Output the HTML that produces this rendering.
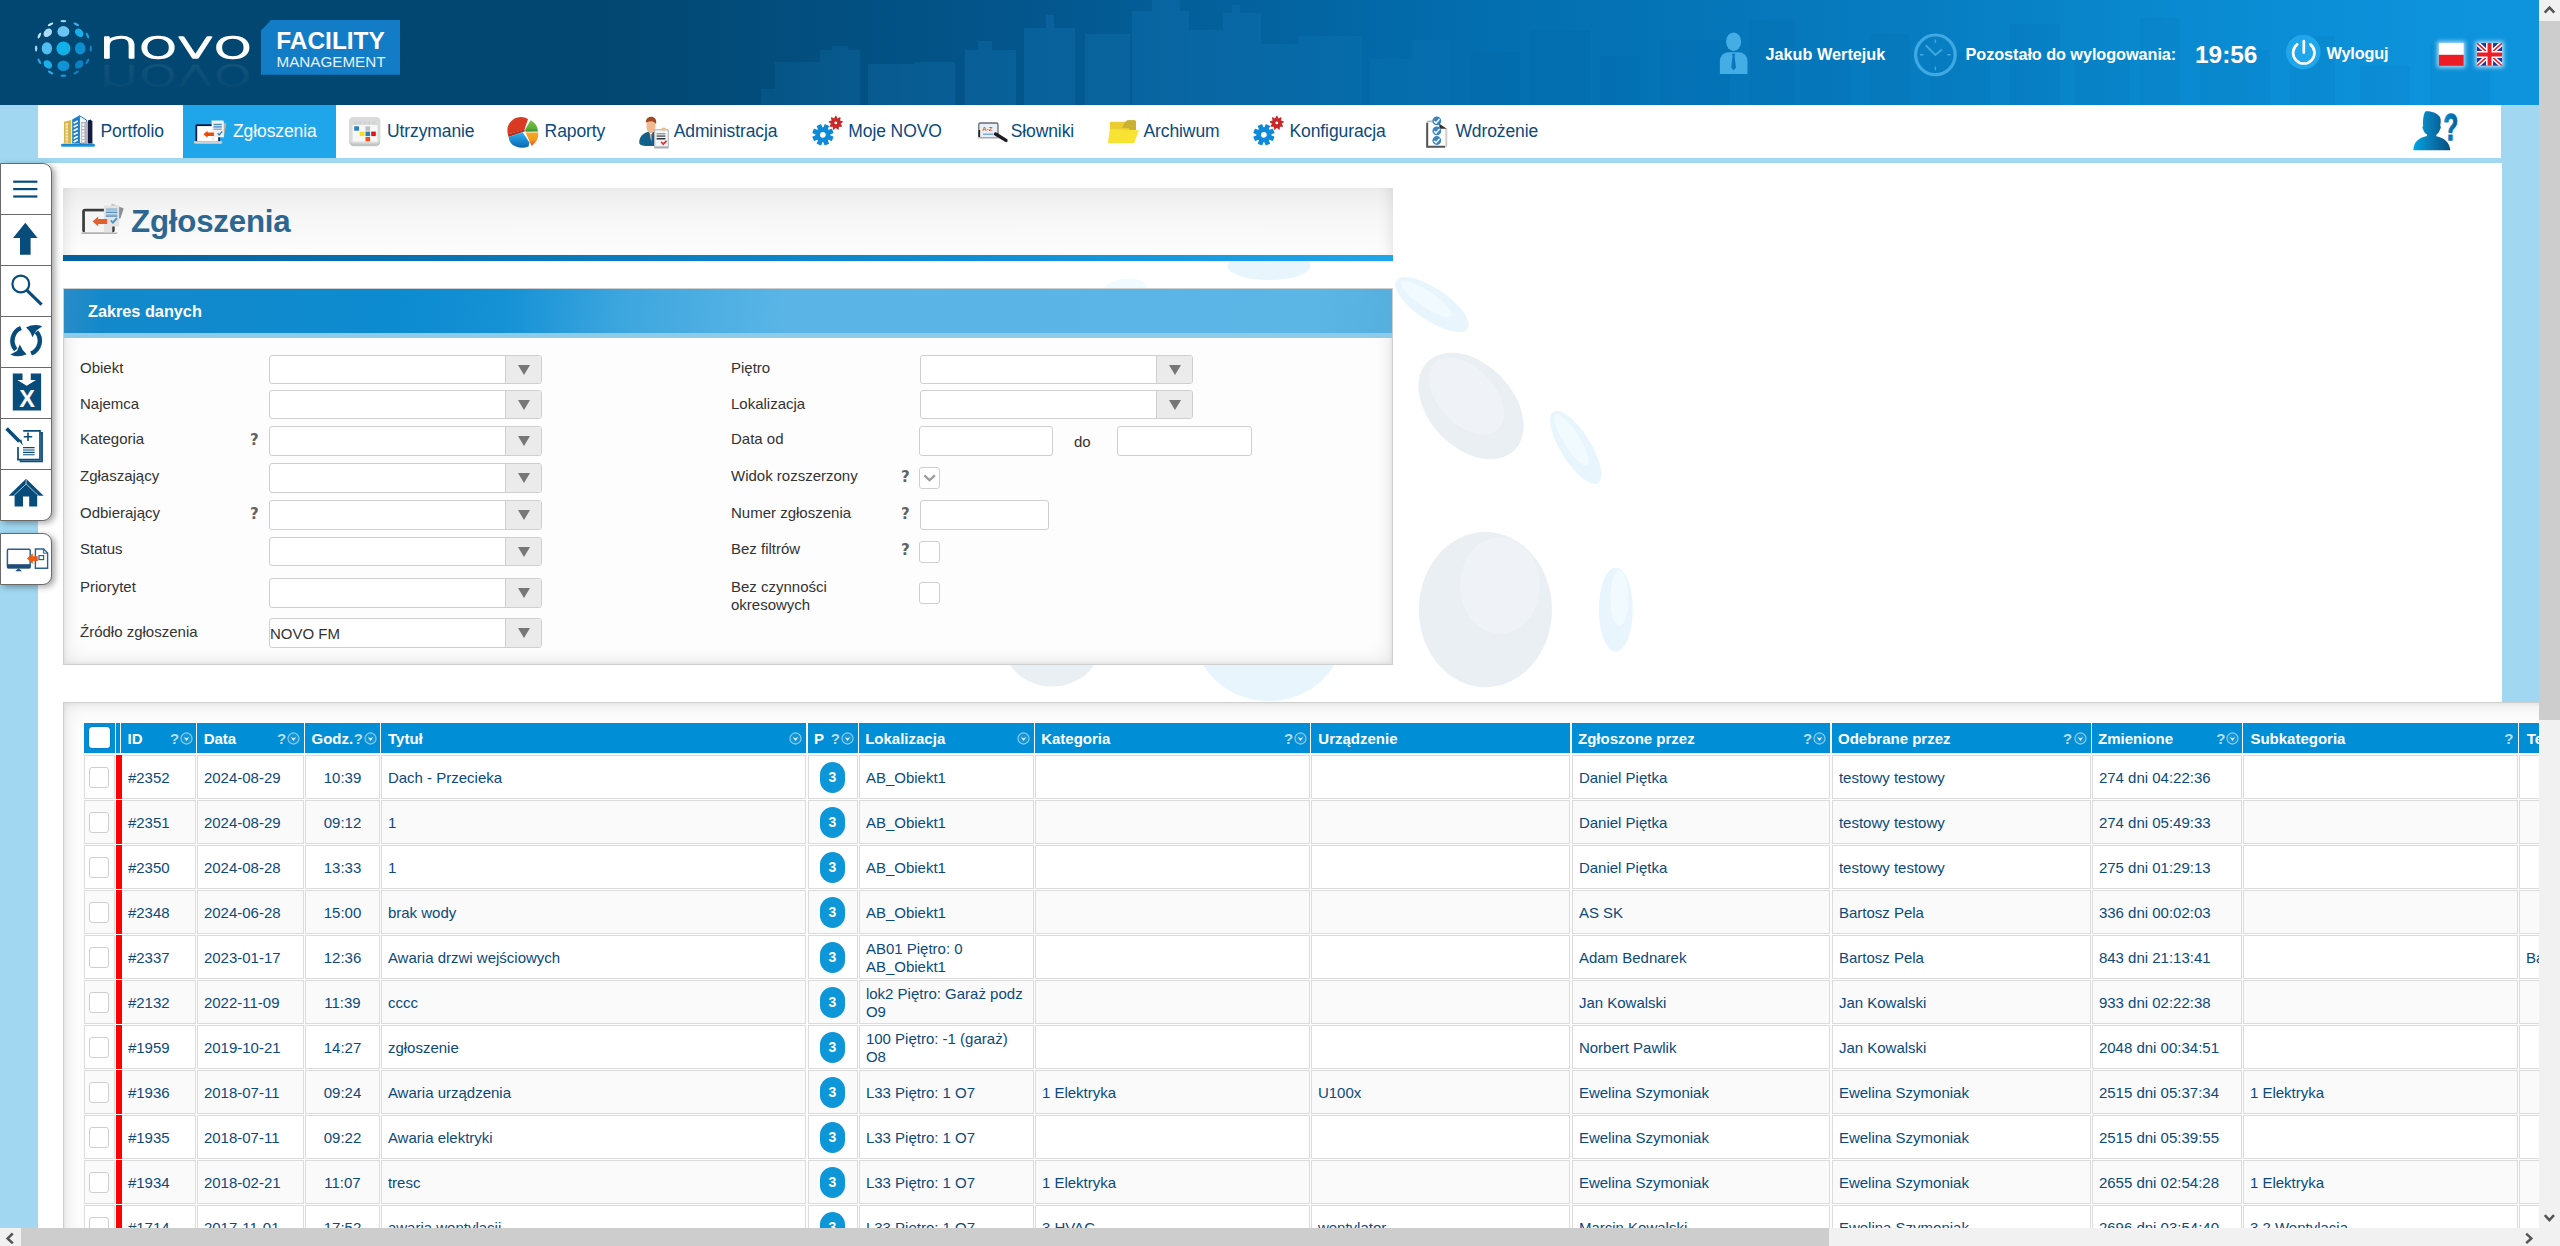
<!DOCTYPE html>
<html lang="pl"><head><meta charset="utf-8"><title>NOVO Facility Management - Zgłoszenia</title>
<style>
*{box-sizing:border-box}
html,body{margin:0;padding:0}
body{width:2560px;height:1246px;overflow:hidden;position:relative;background:#f1f1f1;font-family:"Liberation Sans",sans-serif;font-size:15px;color:#333}
#view{position:absolute;left:0;top:0;width:2539px;height:1228px;overflow:hidden;background:#a1d7f1}
.abs{position:absolute}
#hdr{left:0;top:0;width:2539px;height:105px;background:linear-gradient(90deg,#024771 0,#024771 600px,#03558b 1000px,#036eaf 1480px,#077cc0 1900px,#0a8bd1 2200px,#0d93dc 2450px,#0d94dd 100%)}
#nav{left:37.6px;top:105px;width:2463.5px;height:53px;background:#fff}
#main{left:37.6px;top:163px;width:2464.4px;height:1100px;background:#fff}
.nv{position:absolute;top:105px;height:53px;font-size:17.5px;letter-spacing:-0.1px;color:#0b4a7b;white-space:nowrap;line-height:52px}
.nv.act{background:#1fa5e9;color:#fff}
.nv span{position:absolute;top:0}
.nv svg{position:absolute}
.hw{position:absolute;color:#fff;font-weight:bold;font-size:16.25px;white-space:nowrap;line-height:20px}
.panel{position:absolute;border:1px solid #cfcfcf;background:#fdfdfd;box-shadow:inset 0 0 20px rgba(0,0,0,.11),inset 0 0 5px rgba(0,0,0,.09)}
.lbl{position:absolute;font-size:15px;color:#333;white-space:nowrap;line-height:18px}
.q{position:absolute;font-family:'DejaVu Sans',sans-serif;font-size:15px;font-weight:bold;color:#636363;line-height:18px}
.cb{position:absolute;height:29px;width:273px;border:1px solid #cfcfcf;border-radius:3px;background:#fff;overflow:hidden}
.cb i{position:absolute;right:0;top:0;bottom:0;width:36px;background:#ebebeb;border-left:1px solid #cfcfcf}
.cb i:after{content:"";position:absolute;left:11.5px;top:8.8px;border-left:6px solid transparent;border-right:6px solid transparent;border-top:10px solid #777}
.cb b{position:absolute;left:0;top:6px;font-weight:normal;font-size:15px;color:#333;line-height:18px}
.inp{position:absolute;height:30px;border:1px solid #cfcfcf;border-radius:3px;background:#fff}
.chk{position:absolute;width:21px;height:21.5px;border:1px solid #cfcfcf;border-radius:3px;background:#fff}
.th{position:absolute;top:723px;height:30px;background:#008ed6;color:#fff;font-weight:bold;font-size:15px;line-height:30px;white-space:nowrap;overflow:hidden}
.th span{position:absolute;top:0.8px}
.th .hq{font-size:15px;color:rgba(255,255,255,.72)}
.th svg{position:absolute;top:8.5px}
.td{position:absolute;border:1px solid #dcdcdc;color:#0b4a7b;font-size:15px;line-height:18px;white-space:nowrap;overflow:hidden}
.td span{position:absolute}
.bd{position:absolute;width:25px;height:31px;border-radius:12.5px;background:#0d97d9;color:#fff;font-weight:bold;font-size:14px;line-height:31px;text-align:center}
.rc{position:absolute;width:20.5px;height:20.5px;border:1px solid #cfcfcf;border-radius:3px;background:#fff}
</style></head><body>
<div id="view">
<div id="hdr" class="abs"><svg width="2539" height="105" style="position:absolute;left:0;top:0"><defs><linearGradient id="skf" gradientUnits="userSpaceOnUse" x1="760" y1="0" x2="1460" y2="0"><stop offset="0" stop-color="#1f86c8" stop-opacity="0.14"/><stop offset="0.35" stop-color="#1f8ccf" stop-opacity="0.2"/><stop offset="0.7" stop-color="#2a96dc" stop-opacity="0.12"/><stop offset="1" stop-color="#2a96dc" stop-opacity="0.04"/></linearGradient></defs><path d="M761 105 L761 105 L761 89 L775 89 L775 62 L820 62 L820 50 L832 50 L832 46 L848 46 L848 50 L860 50 L860 105 L868 105 L868 64 L915 64 L915 62 L955 62 L955 105 L965 105 L965 50 L978 50 L978 41 L992 41 L992 50 L1016 50 L1016 105 L1024 105 L1024 28 L1046 28 L1046 15 L1054 15 L1054 28 L1075 28 L1075 105 L1085 105 L1085 34 L1130 34 L1130 105 L1132 105 L1132 11 L1152 11 L1152 0 L1180 0 L1180 11 L1189 11 L1189 30 L1223 30 L1223 13 L1232 13 L1232 5 L1240 5 L1240 13 L1261 13 L1261 44 L1299 44 L1299 36 L1362 36 L1362 105 L1370 105 L1370 59 L1413 59 L1413 40 L1450 40 L1450 105 Z" fill="url(#skf)"/><path d="M1470 105 L1470 105 L1470 52 L1520 52 L1520 105 L1530 105 L1530 30 L1590 30 L1590 105 L1600 105 L1600 56 L1640 56 L1640 105 L1660 105 L1660 40 L1730 40 L1730 105 L1750 105 L1750 20 L1795 20 L1795 105 L1800 105 L1800 60 L1850 60 L1850 105 L1870 105 L1870 34 L1910 34 L1910 105 L1930 105 L1930 52 L1990 52 L1990 105 L2010 105 L2010 24 L2060 24 L2060 105 L2075 105 L2075 60 L2130 60 L2130 105 L2140 105 L2140 18 L2180 18 L2180 105 L2200 105 L2200 50 L2270 50 L2270 105 L2290 105 L2290 36 L2335 36 L2335 105 L2360 105 L2360 66 L2410 66 L2410 105 L2430 105 L2430 44 L2490 44 L2490 105 Z" fill="#035a96" opacity="0.07"/></svg></div>
<div class="abs" style="left:33px;top:17px"><svg width="372" height="64" viewBox="0 0 372 64" style="display:block;overflow:visible"><defs><linearGradient id="rf" x1="0" y1="0" x2="0" y2="1"><stop offset="0" stop-color="#fff" stop-opacity="0.0"/><stop offset="1" stop-color="#fff" stop-opacity="0.085"/></linearGradient></defs><ellipse cx="30.40" cy="31.40" rx="7.00" ry="7.00" fill="#10b0e8" transform="rotate(0 30.40 31.40)"/><ellipse cx="13.90" cy="31.40" rx="5.20" ry="6.10" fill="#52bdf0" transform="rotate(0 13.90 31.40)"/><ellipse cx="47.20" cy="31.40" rx="5.20" ry="6.10" fill="#0c8fd0" transform="rotate(0 47.20 31.40)"/><ellipse cx="30.40" cy="14.40" rx="6.00" ry="5.30" fill="#6ac5f5" transform="rotate(0 30.40 14.40)"/><ellipse cx="30.40" cy="48.80" rx="6.00" ry="5.30" fill="#1192d4" transform="rotate(0 30.40 48.80)"/><ellipse cx="14.80" cy="15.80" rx="4.80" ry="3.60" fill="#a8dcf7" transform="rotate(-45 14.80 15.80)"/><ellipse cx="46.20" cy="15.80" rx="4.80" ry="3.60" fill="#18b0ea" transform="rotate(45 46.20 15.80)"/><ellipse cx="14.80" cy="47.40" rx="4.80" ry="3.60" fill="#18b0ea" transform="rotate(45 14.80 47.40)"/><ellipse cx="46.20" cy="47.40" rx="4.80" ry="3.60" fill="#0c80c4" transform="rotate(-45 46.20 47.40)"/><ellipse cx="30.40" cy="4.10" rx="1.20" ry="3.00" fill="#9fd8f6" transform="rotate(-90 30.40 4.10)"/><ellipse cx="30.40" cy="58.70" rx="1.20" ry="3.00" fill="#1792d2" transform="rotate(90 30.40 58.70)"/><ellipse cx="3.10" cy="31.40" rx="1.20" ry="3.00" fill="#9fd8f6" transform="rotate(180 3.10 31.40)"/><ellipse cx="57.70" cy="31.40" rx="1.20" ry="3.00" fill="#0f86c8" transform="rotate(0 57.70 31.40)"/><ellipse cx="17.58" cy="7.30" rx="1.20" ry="3.10" fill="#bfe5f8" transform="rotate(-118 17.58 7.30)"/><ellipse cx="43.22" cy="7.30" rx="1.20" ry="3.10" fill="#3cb4ea" transform="rotate(-62 43.22 7.30)"/><ellipse cx="6.30" cy="18.58" rx="1.20" ry="3.10" fill="#bfe5f8" transform="rotate(-152 6.30 18.58)"/><ellipse cx="54.50" cy="18.58" rx="1.20" ry="3.10" fill="#18a0e0" transform="rotate(-28 54.50 18.58)"/><ellipse cx="6.30" cy="44.22" rx="1.20" ry="3.10" fill="#2aa8e6" transform="rotate(152 6.30 44.22)"/><ellipse cx="54.50" cy="44.22" rx="1.20" ry="3.10" fill="#0f86c8" transform="rotate(28 54.50 44.22)"/><ellipse cx="17.58" cy="55.50" rx="1.20" ry="3.10" fill="#2aa8e6" transform="rotate(118 17.58 55.50)"/><ellipse cx="43.22" cy="55.50" rx="1.20" ry="3.10" fill="#0f80c0" transform="rotate(62 43.22 55.50)"/><text transform="translate(64.8 40.6) scale(1.84 1)" font-family="DejaVu Sans,Liberation Sans,sans-serif" font-weight="200" font-size="36.5" letter-spacing="-1.6" stroke-width="2.2" vector-effect="non-scaling-stroke" stroke-linejoin="round" fill="#fff" stroke="#fff">novo</text><g opacity="0.55"><text transform="translate(64.8 47.6) scale(1.84 -1)" font-family="DejaVu Sans,Liberation Sans,sans-serif" font-weight="200" font-size="36.5" letter-spacing="-1.6" stroke-width="2.2" vector-effect="non-scaling-stroke" stroke-linejoin="round" fill="url(#rf)" stroke="url(#rf)">novo</text></g><path d="M238 3 H367 V57.8 H228 V13.5 Z" fill="#127cc6"/><text x="243.3" y="32" font-family="Liberation Sans,sans-serif" font-weight="bold" font-size="24" fill="#fff" textLength="108.5" lengthAdjust="spacingAndGlyphs">FACILITY</text><text x="243.5" y="49.6" font-family="Liberation Sans,sans-serif" font-size="14" fill="#e6f2fb" textLength="109" lengthAdjust="spacingAndGlyphs">MANAGEMENT</text></svg></div>
<div class="abs" style="left:1719px;top:32px"><svg width="29" height="42" viewBox="0 0 29 42" style="display:block;overflow:visible" >
<ellipse cx="14.6" cy="9.7" rx="7.5" ry="9.3" fill="#44ade6"/>
<path d="M0.9 42 V30 Q0.9 20.3 10.4 20.3 H18.8 Q28.5 20.3 28.5 30 V42 Z" fill="#44ade6"/>
<path d="M12.8 21.8 H16.4 L15.6 24 L17 35.6 L14.6 38.4 L12.2 35.6 L13.6 24 Z" fill="#0a76bc"/>
</svg></div>
<div class="hw" style="left:1765.5px;top:44px">Jakub Wertejuk</div>
<div class="abs" style="left:1913px;top:33px"><svg width="45" height="45" viewBox="0 0 45 45" style="display:block;overflow:visible" >
<g stroke="#3fa9e3" fill="none">
<circle cx="22.4" cy="21.8" r="19.8" stroke-width="3.2"/>
<path d="M22.4 6.4 v3.6 M22.4 33.6 v3.6 M7 21.8 h3.6 M34.2 21.8 h3.6" stroke-width="1.4"/>
<path d="M12.8 12.4 L22.4 22 L29 16.4" stroke-width="2"/>
</g>
</svg></div>
<div class="hw" style="left:1965.5px;top:44px;letter-spacing:-0.06px">Pozostało do wylogowania:</div>
<div class="hw" style="left:2195px;top:40px;font-size:24.4px;line-height:30px">19:56</div>
<div class="abs" style="left:2285px;top:34px"><svg width="37" height="37" viewBox="0 0 37 37" style="display:block;overflow:visible" >
<circle cx="18.3" cy="18.1" r="17.3" fill="#20a6ea"/>
<path d="M12.2 10.4 A10.7 10.7 0 1 0 25.4 10.4" stroke="#fff" stroke-width="2.7" fill="none" stroke-linecap="round"/>
<path d="M18.8 7.2 V18.6" stroke="#fff" stroke-width="2.7" stroke-linecap="round"/>
</svg></div>
<div class="hw" style="left:2326.5px;top:43px;letter-spacing:-0.15px">Wyloguj</div>
<div class="abs" style="left:2431px;top:35px"><svg width="80" height="40" viewBox="0 0 80 40" style="display:block;overflow:visible" >
<defs><filter id="gl" x="-30%" y="-30%" width="160%" height="160%"><feGaussianBlur stdDeviation="2.2"/></filter>
<clipPath id="uk"><rect x="46" y="8.1" width="25.1" height="22.7"/></clipPath></defs>
<rect x="6.4" y="6.6" width="27.7" height="25.7" fill="#e8f6ff" opacity=".8" filter="url(#gl)"/>
<rect x="44.5" y="6.6" width="28.1" height="25.7" fill="#e8f6ff" opacity=".8" filter="url(#gl)"/>
<rect x="7.9" y="8.1" width="24.7" height="11.8" fill="#fff"/>
<rect x="7.9" y="19.8" width="24.7" height="11" fill="#ed1c24"/>
<g clip-path="url(#uk)">
<rect x="46" y="8.1" width="25.1" height="22.7" fill="#2a2f96"/>
<path d="M46 8.1 L71.1 30.8 M71.1 8.1 L46 30.8" stroke="#fff" stroke-width="4.6"/>
<path d="M46 8.1 L71.1 30.8 M71.1 8.1 L46 30.8" stroke="#e8212b" stroke-width="1.6"/>
<path d="M58.55 8.1 V30.8 M46 19.45 H71.1" stroke="#fff" stroke-width="7"/>
<path d="M58.55 8.1 V30.8 M46 19.45 H71.1" stroke="#ee1c25" stroke-width="4"/>
</g>
</svg></div>
<div id="nav" class="abs"></div>
<div id="main" class="abs"><svg width="2465" height="540" style="position:absolute;left:0;top:0"><ellipse cx="1230.8" cy="103.0" rx="41.5" ry="14.0" fill="#e8f5fc" opacity="1" transform="rotate(0 1230.8 103.0)"/><ellipse cx="1086.4" cy="126.0" rx="22.0" ry="10.0" fill="#f1fafe" opacity="1" transform="rotate(-8 1086.4 126.0)"/><ellipse cx="1394.0" cy="141.6" rx="43.0" ry="16.0" fill="#e8f5fc" opacity="1" transform="rotate(34 1394.0 141.6)"/><ellipse cx="1388.4" cy="136.0" rx="30.0" ry="8.0" fill="#f1fafe" opacity="1" transform="rotate(34 1388.4 136.0)"/><ellipse cx="1433.0" cy="243.0" rx="62.0" ry="42.0" fill="#eaeff4" opacity="1" transform="rotate(46 1433.0 243.0)"/><ellipse cx="1428.4" cy="233.0" rx="46.0" ry="28.0" fill="#eff3f7" opacity="1" transform="rotate(46 1428.4 233.0)"/><ellipse cx="1537.7" cy="284.3" rx="42.0" ry="15.0" fill="#e8f5fc" opacity="1" transform="rotate(58 1537.7 284.3)"/><ellipse cx="1533.4" cy="277.0" rx="30.0" ry="8.0" fill="#f1fafe" opacity="1" transform="rotate(58 1533.4 277.0)"/><ellipse cx="1447.4" cy="446.6" rx="66.6" ry="77.6" fill="#eaeff4" opacity="1" transform="rotate(0 1447.4 446.6)"/><ellipse cx="1461.9" cy="422.4" rx="40.0" ry="48.0" fill="#eff3f7" opacity="1" transform="rotate(0 1461.9 422.4)"/><ellipse cx="1577.8" cy="446.6" rx="17.0" ry="42.0" fill="#e8f5fc" opacity="1" transform="rotate(0 1577.8 446.6)"/><ellipse cx="1581.4" cy="435.0" rx="9.0" ry="28.0" fill="#f1fafe" opacity="1" transform="rotate(0 1581.4 435.0)"/><ellipse cx="1014.1" cy="477.0" rx="50.0" ry="46.6" fill="#eaeff4" opacity="1" transform="rotate(0 1014.1 477.0)"/><ellipse cx="1230.8" cy="468.0" rx="75.0" ry="70.0" fill="#e8f5fc" opacity="1" transform="rotate(0 1230.8 468.0)"/></svg></div>
<div class="abs" style="left:61px;top:115px"><svg width="35" height="33" viewBox="0 0 35 33" style="display:block;overflow:visible" >
<defs><linearGradient id="bb" x1="0" y1="0" x2="0" y2="1"><stop offset="0" stop-color="#1180cc"/><stop offset="1" stop-color="#2b9be0"/></linearGradient></defs>
<rect x="0" y="28.7" width="34" height="3" rx="1.5" fill="url(#bb)"/>
<path d="M2.9 6.8 L10.3 5 L10.3 28.6 L2.9 28.6 Z" fill="#d6b848"/>
<path d="M4.6 8.6 L7 8 L7 27.4 L4.6 27.4 Z" fill="#f6e8d8"/>
<path d="M4.4 11h3M4.4 14h3M4.4 17h3M4.4 20h3M4.4 23h3M4.4 26h3" stroke="#d6b848" stroke-width="0.9"/>
<path d="M11.2 4.4 L18.4 0.6 L18.4 28.6 L11.2 28.6 Z" fill="#1a7fc8"/>
<path d="M18.4 0.6 L25.6 5.2 L25.6 28.6 L18.4 28.6 Z" fill="#f4f8fc" stroke="#1a7fc8" stroke-width="1"/>
<path d="M12.6 8.2 L16.8 6 M12.6 12 L16.8 9.8 M12.6 15.8 L16.8 13.6 M12.6 19.6 L16.8 17.4 M12.6 23.4 L16.8 21.2 M12.6 27 L16.8 24.8" stroke="#fff" stroke-width="1.7"/>
<rect x="20.2" y="7" width="6.6" height="21.6" fill="#b4b4be"/>
<path d="M22.3 8.6v19" stroke="#fff" stroke-width="2.2" stroke-dasharray="2.2 1.1"/>
<path d="M26.9 5.4 L29.6 4.6 L31.4 6.4 L31.4 28.6 L26.9 28.6 Z" fill="#121c42"/>
</svg></div>
<div class="nv" style="left:100.5px;background:none">Portfolio</div>
<div class="nv act" style="left:183px;width:153px"></div>
<div class="abs" style="left:194.2px;top:120.1px"><svg width="33" height="24" viewBox="0 0 33 24" style="display:block;overflow:visible" >
<path d="M23 1.2 L32.4 3.6 L29.8 17.4 L22 15.6 Z" fill="#b9b0a4"/>
<rect x="1.5" y="4.2" width="24.4" height="17.4" rx="1" fill="#0f1b3e"/>
<rect x="3.2" y="6.1" width="21" height="15.2" fill="#fff"/>
<path d="M0 21.2 H28.3 V22.6 Q28.3 23.7 27 23.7 H1.3 Q0 23.7 0 22.6 Z" fill="#d4d4d4"/>
<path d="M17.6 0.6 H28.6 Q29.8 0.6 29.8 1.8 V17.3 H21 V21.2 H17.6 Z" fill="#f1f1f1"/>
<rect x="19.5" y="3.8" width="8.3" height="1.4" fill="#4a8cc4"/><rect x="19.5" y="6.2" width="8.3" height="1.4" fill="#4a8cc4"/><rect x="19.5" y="8.6" width="8.3" height="1.2" fill="#6fa3d0"/>
<path d="M23.6 13.2 L25.2 15 L28.2 11.4" stroke="#2f7fc4" stroke-width="1.4" fill="none"/>
<path d="M9.4 14.3 L13.6 10.8 V12.6 H19.9 V16 H13.6 V17.8 Z" fill="#e84e0b"/>
</svg></div>
<div class="nv act" style="left:233px;background:none">Zgłoszenia</div>
<div class="abs" style="left:349px;top:117px"><svg width="32" height="30" viewBox="0 0 32 30" style="display:block;overflow:visible" >
<rect x="0.2" y="0" width="31" height="29.2" rx="4.5" fill="#c3c6c6"/>
<rect x="0.2" y="0" width="31" height="26.6" rx="4.5" fill="#dadcdc"/>
<g fill="#cfd1d1"><rect x="5" y="4.6" width="2.6" height="2.4"/><rect x="9.6" y="4.6" width="2.6" height="2.4"/><rect x="14.2" y="4.6" width="2.6" height="2.4"/><rect x="18.8" y="4.6" width="2.6" height="2.4"/><rect x="23.4" y="4.6" width="2.6" height="2.4"/></g>
<rect x="3.6" y="8" width="24.8" height="16.6" fill="#f7f7f7"/>
<rect x="5.2" y="9.3" width="4.8" height="4.4" fill="#2d7fc0"/>
<rect x="16.5" y="9.3" width="4.6" height="4.4" fill="#bfc0c0"/>
<rect x="10.7" y="14.6" width="4.8" height="4.5" fill="#f5e020"/>
<rect x="16.5" y="14.6" width="4.6" height="4.5" fill="#2d7fc0"/>
<rect x="22.2" y="14.6" width="4.6" height="4.5" fill="#e01414"/>
<rect x="16.5" y="20" width="4.6" height="4.3" fill="#f0521a"/>
</svg></div>
<div class="nv" style="left:387px;background:none">Utrzymanie</div>
<div class="abs" style="left:507px;top:117px"><svg width="32" height="31" viewBox="0 0 32 31" style="display:block;overflow:visible" >
<defs>
<linearGradient id="pb" x1="0" y1="0" x2="0" y2="1"><stop offset="0" stop-color="#35b4f0"/><stop offset="0.45" stop-color="#1e90d8"/><stop offset="1" stop-color="#0a66b0"/></linearGradient>
<linearGradient id="po" x1="0" y1="0" x2="0" y2="1"><stop offset="0" stop-color="#f8a820"/><stop offset="0.55" stop-color="#f59a20"/><stop offset="1" stop-color="#e04a20"/></linearGradient>
<linearGradient id="pg" x1="0" y1="0" x2="0" y2="1"><stop offset="0" stop-color="#7cc440"/><stop offset="0.7" stop-color="#5aae3c"/><stop offset="1" stop-color="#2f8f3c"/></linearGradient>
</defs>
<path d="M0.9 17.4 C-0.4 12 0.8 6.6 5.5 3 C10 -0.6 17 -0.8 21 2.2 L17.4 12.8 Z" fill="#d83a24"/>
<path d="M0.9 17.2 L17.4 12.6 L18 14.2 L1.5 19.9 Z" fill="#b82c1c"/>
<path d="M1.7 20 L15.4 14.9 L22.4 25.6 L21.6 29.4 C16 31.8 9 30.8 5 27.2 C3 25.4 1.8 22.8 1.7 20 Z" fill="url(#pb)"/>
<path d="M18.2 12.6 L23.6 3.2 C27.5 5 30.6 9 31 14.6 L18.6 14.8 Z" fill="url(#pg)"/>
<path d="M18.6 15.4 L31.2 15.4 C31.6 20 30 23 28.6 25 L24.6 29 Z" fill="url(#po)"/>
</svg></div>
<div class="nv" style="left:544.6px;background:none">Raporty</div>
<div class="abs" style="left:639px;top:116px"><svg width="31" height="33" viewBox="0 0 31 33" style="display:block;overflow:visible" >
<path d="M0.2 27 C0 21 4 17 10 15.6 L15 16 L15 30 L6 30 C2.5 29.6 0.4 28.6 0.2 27 Z" fill="#14608c"/>
<path d="M10.4 15.8 L12.2 25 L13.4 16 Z" fill="#fff"/>
<path d="M11.4 18 L12.4 26.4 L13.2 18 Z" fill="#f06a50"/>
<path d="M7.6 5.6 H16.4 V11.6 C16.4 14.6 14.6 16.6 12.8 17 L11 17 C9.2 16.4 7.6 14.6 7.6 11.6 Z" fill="#f2b98f"/>
<path d="M6.9 6.8 C6.6 3 9 0.8 12 0.8 C15.6 0.8 17.6 3 17.2 7.4 L16.2 7.6 C15.6 5.6 13 5.4 11 5.6 C9 5.8 7.6 6 6.9 6.8 Z" fill="#a04a24"/>
<rect x="15.2" y="13.2" width="14.6" height="19.4" rx="1" fill="#a9abad"/>
<rect x="16.2" y="14.2" width="12.6" height="16.2" fill="#eef6fb"/>
<ellipse cx="24.6" cy="13.2" rx="2.5" ry="1.8" fill="#f2b98f"/>
<rect x="17.6" y="17.2" width="8.8" height="1.2" fill="#8a8a8a"/><rect x="17.6" y="19.4" width="8.8" height="1.4" fill="#555"/><rect x="17.6" y="22" width="8.8" height="1.5" fill="#333"/>
<path d="M22.2 25.8 L24.2 28.2 L27.6 24.8" stroke="#e63030" stroke-width="1.7" fill="none"/>
</svg></div>
<div class="nv" style="left:673.7px;background:none">Administracja</div>
<div class="abs" style="left:812px;top:115px"><svg width="33" height="31" viewBox="0 0 33 31" style="display:block;overflow:visible" ><path d="M20.87 21.95 L19.47 25.33 L16.47 24.04 L15.14 25.37 L16.43 28.37 L13.05 29.77 L11.85 26.74 L9.95 26.74 L8.75 29.77 L5.37 28.37 L6.66 25.37 L5.33 24.04 L2.33 25.33 L0.93 21.95 L3.96 20.75 L3.96 18.85 L0.93 17.65 L2.33 14.27 L5.33 15.56 L6.66 14.23 L5.37 11.23 L8.75 9.83 L9.95 12.86 L11.85 12.86 L13.05 9.83 L16.43 11.23 L15.14 14.23 L16.47 15.56 L19.47 14.27 L20.87 17.65 L17.84 18.85 L17.84 20.75 Z M7.40 19.80 a3.50 3.50 0 1 0 7.00 0 a3.50 3.50 0 1 0 -7.00 0 Z" fill="#0d8ad8" fill-rule="evenodd" stroke="#0d8ad8" stroke-width="1.2" stroke-linejoin="round"/><path d="M23.80 1.35 L25.17 4.19 L28.04 2.89 L27.26 5.95 L30.30 6.80 L27.74 8.64 L29.52 11.25 L26.37 11.01 L26.06 14.15 L23.80 11.95 L21.54 14.15 L21.23 11.01 L18.08 11.25 L19.86 8.64 L17.30 6.80 L20.34 5.95 L19.56 2.89 L22.43 4.19 Z M21.80 7.95 a2.00 2.00 0 1 0 4.00 0 a2.00 2.00 0 1 0 -4.00 0 Z" fill="#c8282a" fill-rule="evenodd" stroke="#c8282a" stroke-width="1.2" stroke-linejoin="round"/></svg></div>
<div class="nv" style="left:848.3px;background:none">Moje NOVO</div>
<div class="abs" style="left:977px;top:121px"><svg width="31" height="21" viewBox="0 0 31 21" style="display:block;overflow:visible" >
<rect x="1.8" y="2" width="19.2" height="14.6" rx="1.6" fill="#e9eff6" stroke="#6a6a78" stroke-width="1.3"/>
<path d="M0.4 17 H22" stroke="#cfcfcf" stroke-width="1.2"/>
<path d="M2.3 9 V16" stroke="#222" stroke-width="1.6"/>
<text x="5.2" y="9.6" font-family="Liberation Sans,sans-serif" font-size="6.2" font-weight="bold" fill="#e0502c">A-Z</text>
<path d="M6 13.2 H16.5" stroke="#5c94c8" stroke-width="1.1"/>
<path d="M18.6 13 L29 19.4" stroke="#1c1c22" stroke-width="3.4" stroke-linecap="round"/>
</svg></div>
<div class="nv" style="left:1010.7px;background:none">Słowniki</div>
<div class="abs" style="left:1108px;top:120px"><svg width="32" height="24" viewBox="0 0 32 24" style="display:block;overflow:visible" >
<path d="M1.8 1.8 H18 L19.6 0.2 H27 L28 1.6 V10 H1.8 Z" fill="#e9cd32"/>
<path d="M16.8 2.6 L19.4 0.2 H27 L28 1.6 V10 H21 V8 H14 Z" fill="#c9b134"/>
<path d="M1.8 9 L30.8 10.2 L26.2 22.9 L0 22.9 Z" fill="#f8e332"/>
</svg></div>
<div class="nv" style="left:1143.5px;background:none">Archiwum</div>
<div class="abs" style="left:1253px;top:115px"><svg width="33" height="31" viewBox="0 0 33 31" style="display:block;overflow:visible" ><path d="M20.87 21.95 L19.47 25.33 L16.47 24.04 L15.14 25.37 L16.43 28.37 L13.05 29.77 L11.85 26.74 L9.95 26.74 L8.75 29.77 L5.37 28.37 L6.66 25.37 L5.33 24.04 L2.33 25.33 L0.93 21.95 L3.96 20.75 L3.96 18.85 L0.93 17.65 L2.33 14.27 L5.33 15.56 L6.66 14.23 L5.37 11.23 L8.75 9.83 L9.95 12.86 L11.85 12.86 L13.05 9.83 L16.43 11.23 L15.14 14.23 L16.47 15.56 L19.47 14.27 L20.87 17.65 L17.84 18.85 L17.84 20.75 Z M7.40 19.80 a3.50 3.50 0 1 0 7.00 0 a3.50 3.50 0 1 0 -7.00 0 Z" fill="#0d8ad8" fill-rule="evenodd" stroke="#0d8ad8" stroke-width="1.2" stroke-linejoin="round"/><path d="M23.80 1.35 L25.17 4.19 L28.04 2.89 L27.26 5.95 L30.30 6.80 L27.74 8.64 L29.52 11.25 L26.37 11.01 L26.06 14.15 L23.80 11.95 L21.54 14.15 L21.23 11.01 L18.08 11.25 L19.86 8.64 L17.30 6.80 L20.34 5.95 L19.56 2.89 L22.43 4.19 Z M21.80 7.95 a2.00 2.00 0 1 0 4.00 0 a2.00 2.00 0 1 0 -4.00 0 Z" fill="#c8282a" fill-rule="evenodd" stroke="#c8282a" stroke-width="1.2" stroke-linejoin="round"/></svg></div>
<div class="nv" style="left:1289.5px;background:none">Konfiguracja</div>
<div class="abs" style="left:1425px;top:116px"><svg width="23" height="32" viewBox="0 0 23 32" style="display:block;overflow:visible" >
<path d="M2.2 31.6 V7 Q2.2 5.4 3.8 5.4 H8" stroke="#b8b8b8" stroke-width="1.6" fill="none"/>
<path d="M2.2 7 V30.7 H20" stroke="#555" stroke-width="2" fill="none"/>
<path d="M21.3 12.6 V29.6 Q21.3 30.7 20 30.7" stroke="#cfcfcf" stroke-width="2" fill="none"/>
<path d="M14 7.6 L21.8 12.8 H14.6 Z" fill="#333"/>
<circle cx="11.8" cy="4.9" r="4.4" fill="#3a82c0"/><path d="M9 5.1 l2 2 l3.6 -4" stroke="#eef6ff" stroke-width="1.5" fill="none"/><circle cx="11.8" cy="14.9" r="4.4" fill="#3a82c0"/><path d="M9 15.1 l2 2 l3.6 -4" stroke="#eef6ff" stroke-width="1.5" fill="none"/><circle cx="11.8" cy="24.5" r="4.4" fill="#3a82c0"/><path d="M9 24.7 l2 2 l3.6 -4" stroke="#eef6ff" stroke-width="1.5" fill="none"/></svg></div>
<div class="nv" style="left:1455.4px;background:none">Wdrożenie</div>
<div class="abs" style="left:2413px;top:109px"><svg width="46" height="42" viewBox="0 0 46 42" style="display:block;overflow:visible" >
<defs><linearGradient id="hg" x1="0" y1="0" x2="1" y2="0"><stop offset="0" stop-color="#00a6e6"/><stop offset="0.45" stop-color="#0a7ab4"/><stop offset="1" stop-color="#034f80"/></linearGradient>
<linearGradient id="hq" x1="0" y1="0" x2="1" y2="0"><stop offset="0" stop-color="#0b8fd6"/><stop offset="1" stop-color="#035a8f"/></linearGradient></defs>
<path d="M0.4 41.3 C0.6 32 7 28.6 14 27 L14 25.6 C11.6 24 10.4 22 10.2 20.2 C9.2 19.6 9.2 17.4 10.2 16.8 C9.6 11 10.6 5.4 12.2 2.4 C18 1.8 24.6 4 27.2 8.4 C28 11 27.8 14 27.2 16.8 C28.2 17.6 28 19.6 27 20.2 C26.6 22.4 25 24.6 23.2 26 L23.4 27.2 C30.6 28.8 36.6 32.6 37.3 41.3 Z" fill="url(#hg)"/>
<text transform="translate(30.6 30.8) scale(0.64 1)" font-family="Liberation Sans,sans-serif" font-weight="bold" font-size="37.5" fill="url(#hq)" stroke="url(#hq)" stroke-width="1.3" stroke-linejoin="round">?</text>
</svg></div>
<div class="abs" style="left:63px;top:188px;width:1330px;height:67px;background:linear-gradient(180deg,#ececec 0,#f6f6f6 40%,#fdfdfd 100%);box-shadow:inset 12px 0 14px -10px rgba(0,0,0,.10),inset -12px 0 14px -10px rgba(0,0,0,.10)"></div>
<div class="abs" style="left:63px;top:255px;width:1330px;height:6px;background:linear-gradient(90deg,#04609a,#0f8fd6 70%,#1fa5ea)"></div>
<div class="abs" style="left:81px;top:203px"><svg width="44" height="32" viewBox="0 0 44 32" style="display:block;overflow:visible" >
<path d="M30.6 0.6 L42.6 5.2 L38.4 16.6 L29 13.4 Z" fill="#b9b9b9"/>
<path d="M38.2 4 L42.6 5.4 L39.4 15.6 L37.6 15 Z" fill="#8e8e96"/>
<rect x="1.2" y="5.7" width="32.5" height="24" rx="2.8" fill="#3b3b3b"/>
<rect x="3.9" y="8.4" width="27.2" height="21" fill="#f5f5f5"/>
<path d="M0.1 29.2 H37 L35.6 31 H0.6 Z" fill="#cfcfcf"/>
<path d="M0.1 30.3 H36.2 L35.6 31.1 H0.6 Z" fill="#a8a8a8"/>
<path d="M22.9 2.6 H38.1 V23.4 H31.2 V29.2 H22.9 Z" fill="#e3e3e3"/>
<rect x="24.9" y="5.2" width="11.4" height="2.7" fill="#9fbfd8"/><rect x="24.9" y="8.7" width="11.4" height="1.2" fill="#4a86b8"/><rect x="24.9" y="10.7" width="11.4" height="1.5" fill="#a4c2da"/><rect x="24.9" y="12.2" width="11.4" height="1.8" fill="#7aa0c0"/>
<path d="M29.8 17.4 L31.9 19.6 L36 15" stroke="#4a96d0" stroke-width="1.9" fill="none"/>
<path d="M11.6 18.4 L17.2 13.6 V15.9 H26.2 V20.9 H17.2 V23.2 Z" fill="#e0602e"/>
</svg></div>
<div class="abs" style="left:131px;top:204.2px;font-size:31.25px;font-weight:bold;color:#2d6690;line-height:36px;letter-spacing:-0.2px;white-space:nowrap">Zgłoszenia</div>
<div class="panel" style="left:63px;top:288px;width:1330px;height:377px"></div>
<div class="abs" style="left:64px;top:289px;width:1328px;height:44px;background:linear-gradient(95deg,#2a8cc6 0,#1389cb 40px,#0d8bd0 330px,#1591d5 440px,#3ea6de 560px,#5ab5e6 720px,#5bb6e6 1250px,#55aede 1328px)"></div>
<div class="abs" style="left:64px;top:333px;width:1328px;height:5px;background:#8dcbeb"></div>
<div class="abs" style="left:88px;top:301px;font-size:16.25px;font-weight:bold;color:#fff;line-height:20px;white-space:nowrap">Zakres danych</div>
<div class="lbl" style="left:80px;top:358.9px">Obiekt</div>
<div class="cb" style="left:269px;top:355px;height:28.75px"><i></i></div>
<div class="lbl" style="left:80px;top:395px">Najemca</div>
<div class="cb" style="left:269px;top:390.1px;height:29.4px"><i></i></div>
<div class="lbl" style="left:80px;top:430px">Kategoria</div>
<div class="q" style="left:250px;top:430.7px">?</div>
<div class="cb" style="left:269px;top:426px;height:29.8px"><i></i></div>
<div class="lbl" style="left:80px;top:467.1px">Zgłaszający</div>
<div class="cb" style="left:269px;top:463px;height:29.7px"><i></i></div>
<div class="lbl" style="left:80px;top:504.2px">Odbierający</div>
<div class="q" style="left:250px;top:504.9px">?</div>
<div class="cb" style="left:269px;top:500.1px;height:29.7px"><i></i></div>
<div class="lbl" style="left:80px;top:539.7px">Status</div>
<div class="cb" style="left:269px;top:537px;height:28.6px"><i></i></div>
<div class="lbl" style="left:80px;top:578.2px">Priorytet</div>
<div class="cb" style="left:269px;top:578px;height:29.5px"><i></i></div>
<div class="lbl" style="left:80px;top:622.5px">Źródło zgłoszenia</div>
<div class="cb" style="left:269px;top:618px;height:29.5px"><i></i><b>NOVO FM</b></div>
<div class="lbl" style="left:731px;top:358.7px">Piętro</div>
<div class="cb" style="left:920px;top:355px;height:28.75px"><i></i></div>
<div class="lbl" style="left:731px;top:394.7px">Lokalizacja</div>
<div class="cb" style="left:920px;top:390.1px;height:29.4px"><i></i></div>
<div class="lbl" style="left:731px;top:429.5px">Data od</div>
<div class="inp" style="left:919px;top:426.3px;width:134px"></div>
<div class="lbl" style="left:1074px;top:433.1px">do</div>
<div class="inp" style="left:1117px;top:426.3px;width:135px"></div>
<div class="lbl" style="left:731px;top:467px">Widok rozszerzony</div>
<div class="q" style="left:901px;top:467.7px">?</div>
<div class="chk" style="left:919px;top:467.3px"><svg width="19" height="19" viewBox="0 0 19 19" style="display:block"><path d="M4.4 7.4 L9.6 12.2 L14.8 7.4" stroke="#999" stroke-width="2.2" fill="none"/></svg></div>
<div class="lbl" style="left:731px;top:504.2px">Numer zgłoszenia</div>
<div class="q" style="left:901px;top:504.9px">?</div>
<div class="inp" style="left:920px;top:500.4px;width:129px"></div>
<div class="lbl" style="left:731px;top:540.1px">Bez filtrów</div>
<div class="q" style="left:901px;top:540.8px">?</div>
<div class="chk" style="left:919px;top:541.3px"></div>
<div class="lbl" style="left:731px;top:577.8px;white-space:normal;width:140px">Bez czynności okresowych</div>
<div class="chk" style="left:919px;top:582.3px"></div>
<div class="panel" style="left:63px;top:702px;width:2600px;height:700px"></div>
<div class="th" style="left:84px;width:31px"><div class="abs" style="left:5px;top:3.8px;width:21px;height:21.4px;background:#fff;border-radius:3.5px;box-shadow:0 0 1.5px rgba(0,0,0,.35)"></div></div>
<div class="th" style="left:116px;width:4px"></div>
<div class="th" style="left:121px;width:75px"><span style="left:6.5px">ID</span><span class="hq" style="left:49px">?</span><svg style="left:59px" width="13" height="13" viewBox="0 0 13 13"><circle cx="6.5" cy="6.5" r="5.6" fill="rgba(255,255,255,.08)" stroke="rgba(255,255,255,.55)" stroke-width="1.1"/><path d="M3.7 4.9 L6.5 9 L9.3 4.9 L6.5 6.2 Z" fill="rgba(255,255,255,.9)"/></svg></div>
<div class="th" style="left:197px;width:107px"><span style="left:6.7px">Data</span><span class="hq" style="left:80px">?</span><svg style="left:90.3px" width="13" height="13" viewBox="0 0 13 13"><circle cx="6.5" cy="6.5" r="5.6" fill="rgba(255,255,255,.08)" stroke="rgba(255,255,255,.55)" stroke-width="1.1"/><path d="M3.7 4.9 L6.5 9 L9.3 4.9 L6.5 6.2 Z" fill="rgba(255,255,255,.9)"/></svg></div>
<div class="th" style="left:305px;width:75px"><span style="left:6.5px">Godz.</span><span class="hq" style="left:48.7px">?</span><svg style="left:58.6px" width="13" height="13" viewBox="0 0 13 13"><circle cx="6.5" cy="6.5" r="5.6" fill="rgba(255,255,255,.08)" stroke="rgba(255,255,255,.55)" stroke-width="1.1"/><path d="M3.7 4.9 L6.5 9 L9.3 4.9 L6.5 6.2 Z" fill="rgba(255,255,255,.9)"/></svg></div>
<div class="th" style="left:381px;width:425px"><span style="left:7px">Tytuł</span><svg style="left:408.4px" width="13" height="13" viewBox="0 0 13 13"><circle cx="6.5" cy="6.5" r="5.6" fill="rgba(255,255,255,.08)" stroke="rgba(255,255,255,.55)" stroke-width="1.1"/><path d="M3.7 4.9 L6.5 9 L9.3 4.9 L6.5 6.2 Z" fill="rgba(255,255,255,.9)"/></svg></div>
<div class="th" style="left:808px;width:50px"><span style="left:6px">P</span><span class="hq" style="left:22.8px">?</span><svg style="left:33.2px" width="13" height="13" viewBox="0 0 13 13"><circle cx="6.5" cy="6.5" r="5.6" fill="rgba(255,255,255,.08)" stroke="rgba(255,255,255,.55)" stroke-width="1.1"/><path d="M3.7 4.9 L6.5 9 L9.3 4.9 L6.5 6.2 Z" fill="rgba(255,255,255,.9)"/></svg></div>
<div class="th" style="left:859px;width:175px"><span style="left:6.2px">Lokalizacja</span><svg style="left:158px" width="13" height="13" viewBox="0 0 13 13"><circle cx="6.5" cy="6.5" r="5.6" fill="rgba(255,255,255,.08)" stroke="rgba(255,255,255,.55)" stroke-width="1.1"/><path d="M3.7 4.9 L6.5 9 L9.3 4.9 L6.5 6.2 Z" fill="rgba(255,255,255,.9)"/></svg></div>
<div class="th" style="left:1035px;width:275px"><span style="left:6.2px">Kategoria</span><span class="hq" style="left:249px">?</span><svg style="left:258.7px" width="13" height="13" viewBox="0 0 13 13"><circle cx="6.5" cy="6.5" r="5.6" fill="rgba(255,255,255,.08)" stroke="rgba(255,255,255,.55)" stroke-width="1.1"/><path d="M3.7 4.9 L6.5 9 L9.3 4.9 L6.5 6.2 Z" fill="rgba(255,255,255,.9)"/></svg></div>
<div class="th" style="left:1311px;width:259px"><span style="left:7.3px">Urządzenie</span></div>
<div class="th" style="left:1572px;width:258px"><span style="left:6px">Zgłoszone przez</span><span class="hq" style="left:231px">?</span><svg style="left:240.6px" width="13" height="13" viewBox="0 0 13 13"><circle cx="6.5" cy="6.5" r="5.6" fill="rgba(255,255,255,.08)" stroke="rgba(255,255,255,.55)" stroke-width="1.1"/><path d="M3.7 4.9 L6.5 9 L9.3 4.9 L6.5 6.2 Z" fill="rgba(255,255,255,.9)"/></svg></div>
<div class="th" style="left:1832px;width:259px"><span style="left:6px">Odebrane przez</span><span class="hq" style="left:231px">?</span><svg style="left:241.6px" width="13" height="13" viewBox="0 0 13 13"><circle cx="6.5" cy="6.5" r="5.6" fill="rgba(255,255,255,.08)" stroke="rgba(255,255,255,.55)" stroke-width="1.1"/><path d="M3.7 4.9 L6.5 9 L9.3 4.9 L6.5 6.2 Z" fill="rgba(255,255,255,.9)"/></svg></div>
<div class="th" style="left:2092px;width:150px"><span style="left:6px">Zmienione</span><span class="hq" style="left:124.2px">?</span><svg style="left:133.6px" width="13" height="13" viewBox="0 0 13 13"><circle cx="6.5" cy="6.5" r="5.6" fill="rgba(255,255,255,.08)" stroke="rgba(255,255,255,.55)" stroke-width="1.1"/><path d="M3.7 4.9 L6.5 9 L9.3 4.9 L6.5 6.2 Z" fill="rgba(255,255,255,.9)"/></svg></div>
<div class="th" style="left:2243px;width:275px"><span style="left:7.4px">Subkategoria</span><span class="hq" style="left:261.3px">?</span></div>
<div class="th" style="left:2519px;width:41px"><span style="left:7.8px">Te</span></div>
<div class="td" style="left:84px;top:755.3px;width:31px;height:43.5px;background:#fff"><div class="rc" style="left:3.7px;top:11px"></div></div>
<div class="td" style="left:121px;top:755.3px;width:75px;height:43.5px;background:#fff"><span style="left:5.9px;top:12.5px">#2352</span></div>
<div class="td" style="left:197px;top:755.3px;width:107px;height:43.5px;background:#fff"><span style="left:5.9px;top:12.5px">2024-08-29</span></div>
<div class="td" style="left:305px;top:755.3px;width:75px;height:43.5px;background:#fff"><span style="left:0;width:73px;text-align:center;top:12.5px">10:39</span></div>
<div class="td" style="left:381px;top:755.3px;width:425px;height:43.5px;background:#fff"><span style="left:5.9px;top:12.5px">Dach - Przecieka</span></div>
<div class="td" style="left:808px;top:755.3px;width:50px;height:43.5px;background:#fff"><div class="bd" style="left:11px;top:5.5px">3</div></div>
<div class="td" style="left:859px;top:755.3px;width:175px;height:43.5px;background:#fff"><span style="left:5.9px;top:12.5px">AB_Obiekt1</span></div>
<div class="td" style="left:1035px;top:755.3px;width:275px;height:43.5px;background:#fff"></div>
<div class="td" style="left:1311px;top:755.3px;width:259px;height:43.5px;background:#fff"></div>
<div class="td" style="left:1572px;top:755.3px;width:258px;height:43.5px;background:#fff"><span style="left:5.9px;top:12.5px">Daniel Piętka</span></div>
<div class="td" style="left:1832px;top:755.3px;width:259px;height:43.5px;background:#fff"><span style="left:5.9px;top:12.5px">testowy testowy</span></div>
<div class="td" style="left:2092px;top:755.3px;width:150px;height:43.5px;background:#fff"><span style="left:5.9px;top:12.5px">274 dni 04:22:36</span></div>
<div class="td" style="left:2243px;top:755.3px;width:275px;height:43.5px;background:#fff"></div>
<div class="td" style="left:2519px;top:755.3px;width:41px;height:43.5px;background:#fff"></div>
<div class="abs" style="left:116px;top:755.3px;width:6px;height:43.7px;background:#f00"></div>
<div class="td" style="left:84px;top:800.3px;width:31px;height:43.5px;background:#fafafa"><div class="rc" style="left:3.7px;top:11px"></div></div>
<div class="td" style="left:121px;top:800.3px;width:75px;height:43.5px;background:#fafafa"><span style="left:5.9px;top:12.5px">#2351</span></div>
<div class="td" style="left:197px;top:800.3px;width:107px;height:43.5px;background:#fafafa"><span style="left:5.9px;top:12.5px">2024-08-29</span></div>
<div class="td" style="left:305px;top:800.3px;width:75px;height:43.5px;background:#fafafa"><span style="left:0;width:73px;text-align:center;top:12.5px">09:12</span></div>
<div class="td" style="left:381px;top:800.3px;width:425px;height:43.5px;background:#fafafa"><span style="left:5.9px;top:12.5px">1</span></div>
<div class="td" style="left:808px;top:800.3px;width:50px;height:43.5px;background:#fafafa"><div class="bd" style="left:11px;top:5.5px">3</div></div>
<div class="td" style="left:859px;top:800.3px;width:175px;height:43.5px;background:#fafafa"><span style="left:5.9px;top:12.5px">AB_Obiekt1</span></div>
<div class="td" style="left:1035px;top:800.3px;width:275px;height:43.5px;background:#fafafa"></div>
<div class="td" style="left:1311px;top:800.3px;width:259px;height:43.5px;background:#fafafa"></div>
<div class="td" style="left:1572px;top:800.3px;width:258px;height:43.5px;background:#fafafa"><span style="left:5.9px;top:12.5px">Daniel Piętka</span></div>
<div class="td" style="left:1832px;top:800.3px;width:259px;height:43.5px;background:#fafafa"><span style="left:5.9px;top:12.5px">testowy testowy</span></div>
<div class="td" style="left:2092px;top:800.3px;width:150px;height:43.5px;background:#fafafa"><span style="left:5.9px;top:12.5px">274 dni 05:49:33</span></div>
<div class="td" style="left:2243px;top:800.3px;width:275px;height:43.5px;background:#fafafa"></div>
<div class="td" style="left:2519px;top:800.3px;width:41px;height:43.5px;background:#fafafa"></div>
<div class="abs" style="left:116px;top:800.3px;width:6px;height:43.7px;background:#f00"></div>
<div class="td" style="left:84px;top:845.3px;width:31px;height:43.5px;background:#fff"><div class="rc" style="left:3.7px;top:11px"></div></div>
<div class="td" style="left:121px;top:845.3px;width:75px;height:43.5px;background:#fff"><span style="left:5.9px;top:12.5px">#2350</span></div>
<div class="td" style="left:197px;top:845.3px;width:107px;height:43.5px;background:#fff"><span style="left:5.9px;top:12.5px">2024-08-28</span></div>
<div class="td" style="left:305px;top:845.3px;width:75px;height:43.5px;background:#fff"><span style="left:0;width:73px;text-align:center;top:12.5px">13:33</span></div>
<div class="td" style="left:381px;top:845.3px;width:425px;height:43.5px;background:#fff"><span style="left:5.9px;top:12.5px">1</span></div>
<div class="td" style="left:808px;top:845.3px;width:50px;height:43.5px;background:#fff"><div class="bd" style="left:11px;top:5.5px">3</div></div>
<div class="td" style="left:859px;top:845.3px;width:175px;height:43.5px;background:#fff"><span style="left:5.9px;top:12.5px">AB_Obiekt1</span></div>
<div class="td" style="left:1035px;top:845.3px;width:275px;height:43.5px;background:#fff"></div>
<div class="td" style="left:1311px;top:845.3px;width:259px;height:43.5px;background:#fff"></div>
<div class="td" style="left:1572px;top:845.3px;width:258px;height:43.5px;background:#fff"><span style="left:5.9px;top:12.5px">Daniel Piętka</span></div>
<div class="td" style="left:1832px;top:845.3px;width:259px;height:43.5px;background:#fff"><span style="left:5.9px;top:12.5px">testowy testowy</span></div>
<div class="td" style="left:2092px;top:845.3px;width:150px;height:43.5px;background:#fff"><span style="left:5.9px;top:12.5px">275 dni 01:29:13</span></div>
<div class="td" style="left:2243px;top:845.3px;width:275px;height:43.5px;background:#fff"></div>
<div class="td" style="left:2519px;top:845.3px;width:41px;height:43.5px;background:#fff"></div>
<div class="abs" style="left:116px;top:845.3px;width:6px;height:43.7px;background:#f00"></div>
<div class="td" style="left:84px;top:890.3px;width:31px;height:43.5px;background:#fafafa"><div class="rc" style="left:3.7px;top:11px"></div></div>
<div class="td" style="left:121px;top:890.3px;width:75px;height:43.5px;background:#fafafa"><span style="left:5.9px;top:12.5px">#2348</span></div>
<div class="td" style="left:197px;top:890.3px;width:107px;height:43.5px;background:#fafafa"><span style="left:5.9px;top:12.5px">2024-06-28</span></div>
<div class="td" style="left:305px;top:890.3px;width:75px;height:43.5px;background:#fafafa"><span style="left:0;width:73px;text-align:center;top:12.5px">15:00</span></div>
<div class="td" style="left:381px;top:890.3px;width:425px;height:43.5px;background:#fafafa"><span style="left:5.9px;top:12.5px">brak wody</span></div>
<div class="td" style="left:808px;top:890.3px;width:50px;height:43.5px;background:#fafafa"><div class="bd" style="left:11px;top:5.5px">3</div></div>
<div class="td" style="left:859px;top:890.3px;width:175px;height:43.5px;background:#fafafa"><span style="left:5.9px;top:12.5px">AB_Obiekt1</span></div>
<div class="td" style="left:1035px;top:890.3px;width:275px;height:43.5px;background:#fafafa"></div>
<div class="td" style="left:1311px;top:890.3px;width:259px;height:43.5px;background:#fafafa"></div>
<div class="td" style="left:1572px;top:890.3px;width:258px;height:43.5px;background:#fafafa"><span style="left:5.9px;top:12.5px">AS SK</span></div>
<div class="td" style="left:1832px;top:890.3px;width:259px;height:43.5px;background:#fafafa"><span style="left:5.9px;top:12.5px">Bartosz Pela</span></div>
<div class="td" style="left:2092px;top:890.3px;width:150px;height:43.5px;background:#fafafa"><span style="left:5.9px;top:12.5px">336 dni 00:02:03</span></div>
<div class="td" style="left:2243px;top:890.3px;width:275px;height:43.5px;background:#fafafa"></div>
<div class="td" style="left:2519px;top:890.3px;width:41px;height:43.5px;background:#fafafa"></div>
<div class="abs" style="left:116px;top:890.3px;width:6px;height:43.7px;background:#f00"></div>
<div class="td" style="left:84px;top:935.3px;width:31px;height:43.5px;background:#fff"><div class="rc" style="left:3.7px;top:11px"></div></div>
<div class="td" style="left:121px;top:935.3px;width:75px;height:43.5px;background:#fff"><span style="left:5.9px;top:12.5px">#2337</span></div>
<div class="td" style="left:197px;top:935.3px;width:107px;height:43.5px;background:#fff"><span style="left:5.9px;top:12.5px">2023-01-17</span></div>
<div class="td" style="left:305px;top:935.3px;width:75px;height:43.5px;background:#fff"><span style="left:0;width:73px;text-align:center;top:12.5px">12:36</span></div>
<div class="td" style="left:381px;top:935.3px;width:425px;height:43.5px;background:#fff"><span style="left:5.9px;top:12.5px">Awaria drzwi wejściowych</span></div>
<div class="td" style="left:808px;top:935.3px;width:50px;height:43.5px;background:#fff"><div class="bd" style="left:11px;top:5.5px">3</div></div>
<div class="td" style="left:859px;top:935.3px;width:175px;height:43.5px;background:#fff"><span style="left:5.9px;top:3.4px">AB01 Piętro: 0</span><span style="left:5.9px;top:21.4px">AB_Obiekt1</span></div>
<div class="td" style="left:1035px;top:935.3px;width:275px;height:43.5px;background:#fff"></div>
<div class="td" style="left:1311px;top:935.3px;width:259px;height:43.5px;background:#fff"></div>
<div class="td" style="left:1572px;top:935.3px;width:258px;height:43.5px;background:#fff"><span style="left:5.9px;top:12.5px">Adam Bednarek</span></div>
<div class="td" style="left:1832px;top:935.3px;width:259px;height:43.5px;background:#fff"><span style="left:5.9px;top:12.5px">Bartosz Pela</span></div>
<div class="td" style="left:2092px;top:935.3px;width:150px;height:43.5px;background:#fff"><span style="left:5.9px;top:12.5px">843 dni 21:13:41</span></div>
<div class="td" style="left:2243px;top:935.3px;width:275px;height:43.5px;background:#fff"></div>
<div class="td" style="left:2519px;top:935.3px;width:41px;height:43.5px;background:#fff"><span style="left:5.9px;top:12.5px">Bartosz</span></div>
<div class="abs" style="left:116px;top:935.3px;width:6px;height:43.7px;background:#f00"></div>
<div class="td" style="left:84px;top:980.3px;width:31px;height:43.5px;background:#fafafa"><div class="rc" style="left:3.7px;top:11px"></div></div>
<div class="td" style="left:121px;top:980.3px;width:75px;height:43.5px;background:#fafafa"><span style="left:5.9px;top:12.5px">#2132</span></div>
<div class="td" style="left:197px;top:980.3px;width:107px;height:43.5px;background:#fafafa"><span style="left:5.9px;top:12.5px">2022-11-09</span></div>
<div class="td" style="left:305px;top:980.3px;width:75px;height:43.5px;background:#fafafa"><span style="left:0;width:73px;text-align:center;top:12.5px">11:39</span></div>
<div class="td" style="left:381px;top:980.3px;width:425px;height:43.5px;background:#fafafa"><span style="left:5.9px;top:12.5px">cccc</span></div>
<div class="td" style="left:808px;top:980.3px;width:50px;height:43.5px;background:#fafafa"><div class="bd" style="left:11px;top:5.5px">3</div></div>
<div class="td" style="left:859px;top:980.3px;width:175px;height:43.5px;background:#fafafa"><span style="left:5.9px;top:3.4px">lok2 Piętro: Garaż podz</span><span style="left:5.9px;top:21.4px">O9</span></div>
<div class="td" style="left:1035px;top:980.3px;width:275px;height:43.5px;background:#fafafa"></div>
<div class="td" style="left:1311px;top:980.3px;width:259px;height:43.5px;background:#fafafa"></div>
<div class="td" style="left:1572px;top:980.3px;width:258px;height:43.5px;background:#fafafa"><span style="left:5.9px;top:12.5px">Jan Kowalski</span></div>
<div class="td" style="left:1832px;top:980.3px;width:259px;height:43.5px;background:#fafafa"><span style="left:5.9px;top:12.5px">Jan Kowalski</span></div>
<div class="td" style="left:2092px;top:980.3px;width:150px;height:43.5px;background:#fafafa"><span style="left:5.9px;top:12.5px">933 dni 02:22:38</span></div>
<div class="td" style="left:2243px;top:980.3px;width:275px;height:43.5px;background:#fafafa"></div>
<div class="td" style="left:2519px;top:980.3px;width:41px;height:43.5px;background:#fafafa"></div>
<div class="abs" style="left:116px;top:980.3px;width:6px;height:43.7px;background:#f00"></div>
<div class="td" style="left:84px;top:1025.3px;width:31px;height:43.5px;background:#fff"><div class="rc" style="left:3.7px;top:11px"></div></div>
<div class="td" style="left:121px;top:1025.3px;width:75px;height:43.5px;background:#fff"><span style="left:5.9px;top:12.5px">#1959</span></div>
<div class="td" style="left:197px;top:1025.3px;width:107px;height:43.5px;background:#fff"><span style="left:5.9px;top:12.5px">2019-10-21</span></div>
<div class="td" style="left:305px;top:1025.3px;width:75px;height:43.5px;background:#fff"><span style="left:0;width:73px;text-align:center;top:12.5px">14:27</span></div>
<div class="td" style="left:381px;top:1025.3px;width:425px;height:43.5px;background:#fff"><span style="left:5.9px;top:12.5px">zgłoszenie</span></div>
<div class="td" style="left:808px;top:1025.3px;width:50px;height:43.5px;background:#fff"><div class="bd" style="left:11px;top:5.5px">3</div></div>
<div class="td" style="left:859px;top:1025.3px;width:175px;height:43.5px;background:#fff"><span style="left:5.9px;top:3.4px">100 Piętro: -1 (garaż)</span><span style="left:5.9px;top:21.4px">O8</span></div>
<div class="td" style="left:1035px;top:1025.3px;width:275px;height:43.5px;background:#fff"></div>
<div class="td" style="left:1311px;top:1025.3px;width:259px;height:43.5px;background:#fff"></div>
<div class="td" style="left:1572px;top:1025.3px;width:258px;height:43.5px;background:#fff"><span style="left:5.9px;top:12.5px">Norbert Pawlik</span></div>
<div class="td" style="left:1832px;top:1025.3px;width:259px;height:43.5px;background:#fff"><span style="left:5.9px;top:12.5px">Jan Kowalski</span></div>
<div class="td" style="left:2092px;top:1025.3px;width:150px;height:43.5px;background:#fff"><span style="left:5.9px;top:12.5px">2048 dni 00:34:51</span></div>
<div class="td" style="left:2243px;top:1025.3px;width:275px;height:43.5px;background:#fff"></div>
<div class="td" style="left:2519px;top:1025.3px;width:41px;height:43.5px;background:#fff"></div>
<div class="abs" style="left:116px;top:1025.3px;width:6px;height:43.7px;background:#f00"></div>
<div class="td" style="left:84px;top:1070.3px;width:31px;height:43.5px;background:#fafafa"><div class="rc" style="left:3.7px;top:11px"></div></div>
<div class="td" style="left:121px;top:1070.3px;width:75px;height:43.5px;background:#fafafa"><span style="left:5.9px;top:12.5px">#1936</span></div>
<div class="td" style="left:197px;top:1070.3px;width:107px;height:43.5px;background:#fafafa"><span style="left:5.9px;top:12.5px">2018-07-11</span></div>
<div class="td" style="left:305px;top:1070.3px;width:75px;height:43.5px;background:#fafafa"><span style="left:0;width:73px;text-align:center;top:12.5px">09:24</span></div>
<div class="td" style="left:381px;top:1070.3px;width:425px;height:43.5px;background:#fafafa"><span style="left:5.9px;top:12.5px">Awaria urządzenia</span></div>
<div class="td" style="left:808px;top:1070.3px;width:50px;height:43.5px;background:#fafafa"><div class="bd" style="left:11px;top:5.5px">3</div></div>
<div class="td" style="left:859px;top:1070.3px;width:175px;height:43.5px;background:#fafafa"><span style="left:5.9px;top:12.5px">L33 Piętro: 1 O7</span></div>
<div class="td" style="left:1035px;top:1070.3px;width:275px;height:43.5px;background:#fafafa"><span style="left:5.9px;top:12.5px">1 Elektryka</span></div>
<div class="td" style="left:1311px;top:1070.3px;width:259px;height:43.5px;background:#fafafa"><span style="left:5.9px;top:12.5px">U100x</span></div>
<div class="td" style="left:1572px;top:1070.3px;width:258px;height:43.5px;background:#fafafa"><span style="left:5.9px;top:12.5px">Ewelina Szymoniak</span></div>
<div class="td" style="left:1832px;top:1070.3px;width:259px;height:43.5px;background:#fafafa"><span style="left:5.9px;top:12.5px">Ewelina Szymoniak</span></div>
<div class="td" style="left:2092px;top:1070.3px;width:150px;height:43.5px;background:#fafafa"><span style="left:5.9px;top:12.5px">2515 dni 05:37:34</span></div>
<div class="td" style="left:2243px;top:1070.3px;width:275px;height:43.5px;background:#fafafa"><span style="left:5.9px;top:12.5px">1 Elektryka</span></div>
<div class="td" style="left:2519px;top:1070.3px;width:41px;height:43.5px;background:#fafafa"></div>
<div class="abs" style="left:116px;top:1070.3px;width:6px;height:43.7px;background:#f00"></div>
<div class="td" style="left:84px;top:1115.3px;width:31px;height:43.5px;background:#fff"><div class="rc" style="left:3.7px;top:11px"></div></div>
<div class="td" style="left:121px;top:1115.3px;width:75px;height:43.5px;background:#fff"><span style="left:5.9px;top:12.5px">#1935</span></div>
<div class="td" style="left:197px;top:1115.3px;width:107px;height:43.5px;background:#fff"><span style="left:5.9px;top:12.5px">2018-07-11</span></div>
<div class="td" style="left:305px;top:1115.3px;width:75px;height:43.5px;background:#fff"><span style="left:0;width:73px;text-align:center;top:12.5px">09:22</span></div>
<div class="td" style="left:381px;top:1115.3px;width:425px;height:43.5px;background:#fff"><span style="left:5.9px;top:12.5px">Awaria elektryki</span></div>
<div class="td" style="left:808px;top:1115.3px;width:50px;height:43.5px;background:#fff"><div class="bd" style="left:11px;top:5.5px">3</div></div>
<div class="td" style="left:859px;top:1115.3px;width:175px;height:43.5px;background:#fff"><span style="left:5.9px;top:12.5px">L33 Piętro: 1 O7</span></div>
<div class="td" style="left:1035px;top:1115.3px;width:275px;height:43.5px;background:#fff"></div>
<div class="td" style="left:1311px;top:1115.3px;width:259px;height:43.5px;background:#fff"></div>
<div class="td" style="left:1572px;top:1115.3px;width:258px;height:43.5px;background:#fff"><span style="left:5.9px;top:12.5px">Ewelina Szymoniak</span></div>
<div class="td" style="left:1832px;top:1115.3px;width:259px;height:43.5px;background:#fff"><span style="left:5.9px;top:12.5px">Ewelina Szymoniak</span></div>
<div class="td" style="left:2092px;top:1115.3px;width:150px;height:43.5px;background:#fff"><span style="left:5.9px;top:12.5px">2515 dni 05:39:55</span></div>
<div class="td" style="left:2243px;top:1115.3px;width:275px;height:43.5px;background:#fff"></div>
<div class="td" style="left:2519px;top:1115.3px;width:41px;height:43.5px;background:#fff"></div>
<div class="abs" style="left:116px;top:1115.3px;width:6px;height:43.7px;background:#f00"></div>
<div class="td" style="left:84px;top:1160.3px;width:31px;height:43.5px;background:#fafafa"><div class="rc" style="left:3.7px;top:11px"></div></div>
<div class="td" style="left:121px;top:1160.3px;width:75px;height:43.5px;background:#fafafa"><span style="left:5.9px;top:12.5px">#1934</span></div>
<div class="td" style="left:197px;top:1160.3px;width:107px;height:43.5px;background:#fafafa"><span style="left:5.9px;top:12.5px">2018-02-21</span></div>
<div class="td" style="left:305px;top:1160.3px;width:75px;height:43.5px;background:#fafafa"><span style="left:0;width:73px;text-align:center;top:12.5px">11:07</span></div>
<div class="td" style="left:381px;top:1160.3px;width:425px;height:43.5px;background:#fafafa"><span style="left:5.9px;top:12.5px">tresc</span></div>
<div class="td" style="left:808px;top:1160.3px;width:50px;height:43.5px;background:#fafafa"><div class="bd" style="left:11px;top:5.5px">3</div></div>
<div class="td" style="left:859px;top:1160.3px;width:175px;height:43.5px;background:#fafafa"><span style="left:5.9px;top:12.5px">L33 Piętro: 1 O7</span></div>
<div class="td" style="left:1035px;top:1160.3px;width:275px;height:43.5px;background:#fafafa"><span style="left:5.9px;top:12.5px">1 Elektryka</span></div>
<div class="td" style="left:1311px;top:1160.3px;width:259px;height:43.5px;background:#fafafa"></div>
<div class="td" style="left:1572px;top:1160.3px;width:258px;height:43.5px;background:#fafafa"><span style="left:5.9px;top:12.5px">Ewelina Szymoniak</span></div>
<div class="td" style="left:1832px;top:1160.3px;width:259px;height:43.5px;background:#fafafa"><span style="left:5.9px;top:12.5px">Ewelina Szymoniak</span></div>
<div class="td" style="left:2092px;top:1160.3px;width:150px;height:43.5px;background:#fafafa"><span style="left:5.9px;top:12.5px">2655 dni 02:54:28</span></div>
<div class="td" style="left:2243px;top:1160.3px;width:275px;height:43.5px;background:#fafafa"><span style="left:5.9px;top:12.5px">1 Elektryka</span></div>
<div class="td" style="left:2519px;top:1160.3px;width:41px;height:43.5px;background:#fafafa"></div>
<div class="abs" style="left:116px;top:1160.3px;width:6px;height:43.7px;background:#f00"></div>
<div class="td" style="left:84px;top:1205.3px;width:31px;height:43.5px;background:#fff"><div class="rc" style="left:3.7px;top:11px"></div></div>
<div class="td" style="left:121px;top:1205.3px;width:75px;height:43.5px;background:#fff"><span style="left:5.9px;top:12.5px">#1714</span></div>
<div class="td" style="left:197px;top:1205.3px;width:107px;height:43.5px;background:#fff"><span style="left:5.9px;top:12.5px">2017-11-01</span></div>
<div class="td" style="left:305px;top:1205.3px;width:75px;height:43.5px;background:#fff"><span style="left:0;width:73px;text-align:center;top:12.5px">17:52</span></div>
<div class="td" style="left:381px;top:1205.3px;width:425px;height:43.5px;background:#fff"><span style="left:5.9px;top:12.5px">awaria wentylacji</span></div>
<div class="td" style="left:808px;top:1205.3px;width:50px;height:43.5px;background:#fff"><div class="bd" style="left:11px;top:5.5px">3</div></div>
<div class="td" style="left:859px;top:1205.3px;width:175px;height:43.5px;background:#fff"><span style="left:5.9px;top:12.5px">L33 Piętro: 1 O7</span></div>
<div class="td" style="left:1035px;top:1205.3px;width:275px;height:43.5px;background:#fff"><span style="left:5.9px;top:12.5px">3 HVAC</span></div>
<div class="td" style="left:1311px;top:1205.3px;width:259px;height:43.5px;background:#fff"><span style="left:5.9px;top:12.5px">wentylator</span></div>
<div class="td" style="left:1572px;top:1205.3px;width:258px;height:43.5px;background:#fff"><span style="left:5.9px;top:12.5px">Marcin Kowalski</span></div>
<div class="td" style="left:1832px;top:1205.3px;width:259px;height:43.5px;background:#fff"><span style="left:5.9px;top:12.5px">Ewelina Szymoniak</span></div>
<div class="td" style="left:2092px;top:1205.3px;width:150px;height:43.5px;background:#fff"><span style="left:5.9px;top:12.5px">2696 dni 03:54:40</span></div>
<div class="td" style="left:2243px;top:1205.3px;width:275px;height:43.5px;background:#fff"><span style="left:5.9px;top:12.5px">3.2 Wentylacja</span></div>
<div class="td" style="left:2519px;top:1205.3px;width:41px;height:43.5px;background:#fff"></div>
<div class="abs" style="left:116px;top:1205.3px;width:6px;height:43.7px;background:#f00"></div>
<div class="abs" style="left:0;top:163px;width:52px;height:358px;background:#fff;border:1px solid #6a6a6a;border-radius:0 9px 9px 0;box-shadow:3px 2px 6px rgba(0,0,0,.35)"></div>
<div class="abs" style="left:0;top:214px;width:51px;height:1px;background:#6a6a6a"></div>
<div class="abs" style="left:0;top:265px;width:51px;height:1px;background:#6a6a6a"></div>
<div class="abs" style="left:0;top:316px;width:51px;height:1px;background:#6a6a6a"></div>
<div class="abs" style="left:0;top:367px;width:51px;height:1px;background:#6a6a6a"></div>
<div class="abs" style="left:0;top:418px;width:51px;height:1px;background:#6a6a6a"></div>
<div class="abs" style="left:0;top:469px;width:51px;height:1px;background:#6a6a6a"></div>
<div class="abs" style="left:0;top:533.2px;width:52px;height:51.4px;background:#fff;border:1px solid #6a6a6a;border-radius:0 9px 9px 0;box-shadow:3px 2px 6px rgba(0,0,0,.35)"></div>
<div class="abs" style="left:0;top:163px"><svg width="52" height="430" viewBox="0 0 52 430" style="display:block;overflow:visible" >
<g fill="#084c7b" stroke="none">
<rect x="13.2" y="17.6" width="24.2" height="2.2"/><rect x="13.2" y="25" width="24.2" height="2.2"/><rect x="13.2" y="32.4" width="24.2" height="2.2"/>
<path d="M25.3 59.8 L37.6 75 H30.6 V91.8 H20 V75 H13 Z"/>
</g>
<g stroke="#084c7b" fill="none">
<circle cx="20.8" cy="121" r="8.4" stroke-width="2.2"/>
<path d="M27 127.4 L41.6 141.6" stroke-width="3.2"/>
<path d="M21 165 A13.7 13.7 0 0 0 15.8 186.7" stroke-width="4.5"/>
<path d="M31.1 190.5 A13.7 13.7 0 0 0 36.4 168.7" stroke-width="4.5"/>
</g>
<g fill="#084c7b">
<path d="M10.4 191.4 L17 188 L19.9 181.6 Q22 187.6 26.6 191.2 Q18 195.4 10.4 191.4 Z"/>
<path d="M26 164.4 Q34 160.4 42.3 163.2 L36.4 167.6 L32.4 174.2 Q30.6 168 26 164.4 Z"/>
<path d="M12.8 210.6 H22.5 V217 H17.3 L26.7 222.8 L36 217 H30.8 V210.6 H41.1 V247.6 H12.8 Z"/>
</g>
<text x="19.2" y="243.6" font-family="Liberation Sans,sans-serif" font-weight="bold" font-size="23.5" fill="#fff">X</text>
<g stroke="#084c7b" fill="none">
<path d="M6.6 265.4 L19.4 278.6" stroke-width="3.6"/>
<path d="M23.2 267.8 H40 V296.6 H18 V284" stroke-width="1.7"/>
<path d="M40.8 270 H42 V298.4 H20.6 V297.2" stroke-width="1.8"/>
<path d="M28 269.6 v8.4 M23.8 273.8 h8.4" stroke-width="1.6"/>
<path d="M23 284.6 h11.6 M23 287 h11.6 M23 289.4 h11.6 M23 291.8 h11.6" stroke-width="1.1"/>
</g>
<path d="M18.6 277.6 L22.8 282.6 L21.4 276.4 Z" fill="#084c7b"/>
<g fill="#084c7b">
<path d="M26.1 315.8 L43.6 332.8 H8.6 Z"/>
<path d="M14.6 330 H37.2 V343.6 H29.2 V333.4 H23 V343.6 H14.6 Z"/>
</g>
<path d="M26.1 316.2 V321 M26.1 321 L13.4 333 M26.1 321 L38.8 333" stroke="#fff" stroke-width="0.9" fill="none" opacity=".75"/>
<g stroke="#2d5f8c" fill="none">
<rect x="7.4" y="386.2" width="22.8" height="18.6" rx="1" stroke-width="1.5"/>
<path d="M35.4 386 H43.6 L47.6 390 V405.2 H35.4 Z" stroke-width="1.4"/>
<path d="M43.4 386 V390.2 H47.6" stroke-width="1"/>
<rect x="39" y="392.6" width="4.6" height="4" stroke-width="1.2"/>
</g>
<rect x="7.4" y="401.2" width="22.8" height="4.2" fill="#1f4c78"/>
<path d="M15.2 408.2 L18.6 405.2 L22 408.2 Z" fill="#1f4c78"/>
<path d="M27 395.6 L32.8 390.2 V393.2 H37.8 V398 H32.8 V401 Z" fill="#ee5a10"/>
</svg></div>
</div>
<div class="abs" style="left:2539px;top:0;width:21px;height:1228px;background:#f1f1f1"></div>
<div class="abs" style="left:2539px;top:21px;width:21px;height:698.6px;background:#cdcdcd"></div>
<div class="abs" style="left:0;top:1228px;width:2560px;height:18px;background:#f1f1f1"></div>
<div class="abs" style="left:21px;top:1228px;width:1808px;height:18px;background:#cdcdcd"></div>
<div class="abs" style="left:0;top:0"><svg width="2560" height="1246" style="display:block"><g stroke="#555" stroke-width="2.5" fill="none">
<path d="M2544.7 12.7 L2549.5 7.6 L2554.3 12.7"/>
<path d="M2544.8 1215.2 L2549.4 1220.2 L2554 1215.2"/>
<path d="M12.8 1233.5 L7.6 1238.4 L12.8 1243.3"/>
<path d="M2526.2 1233.7 L2531.3 1238.4 L2526.2 1243.1"/>
</g></svg></div>
</body></html>
